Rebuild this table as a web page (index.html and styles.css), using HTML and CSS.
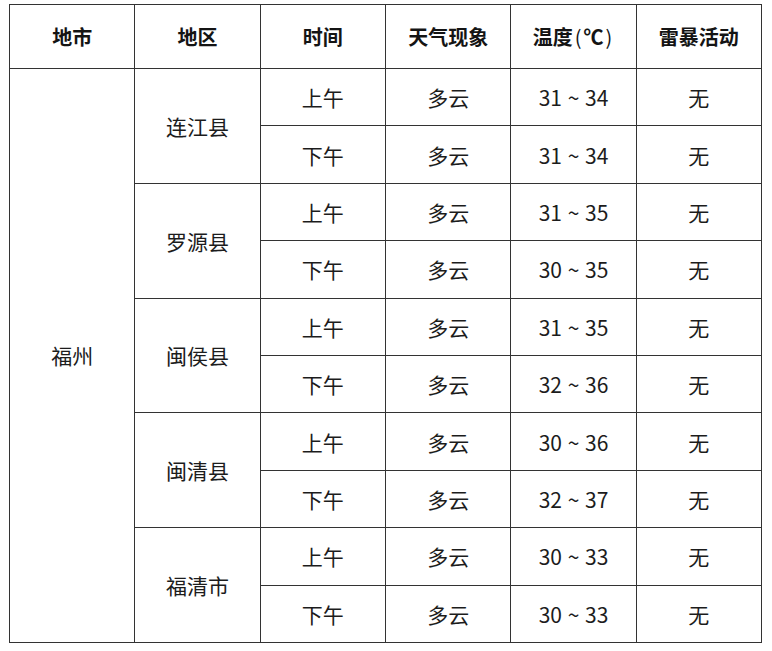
FILE: index.html
```html
<!DOCTYPE html>
<html lang="zh">
<head>
<meta charset="utf-8">
<link rel="stylesheet" href="styles.css">
</head>
<body>
<table class="forecast">
  <thead>
    <tr class="head">
      <th>地市</th><th>地区</th><th>时间</th><th>天气现象</th><th>温度<span class="paren">(</span>℃<span class="paren">)</span></th><th>雷暴活动</th>
    </tr>
  </thead>
  <tbody>
    <tr><td rowspan="10">福州</td><td rowspan="2">连江县</td><td>上午</td><td>多云</td><td>31 ~ 34</td><td>无</td></tr>
    <tr><td>下午</td><td>多云</td><td>31 ~ 34</td><td>无</td></tr>
    <tr><td rowspan="2">罗源县</td><td>上午</td><td>多云</td><td>31 ~ 35</td><td>无</td></tr>
    <tr><td>下午</td><td>多云</td><td>30 ~ 35</td><td>无</td></tr>
    <tr><td rowspan="2">闽侯县</td><td>上午</td><td>多云</td><td>31 ~ 35</td><td>无</td></tr>
    <tr><td>下午</td><td>多云</td><td>32 ~ 36</td><td>无</td></tr>
    <tr><td rowspan="2">闽清县</td><td>上午</td><td>多云</td><td>30 ~ 36</td><td>无</td></tr>
    <tr><td>下午</td><td>多云</td><td>32 ~ 37</td><td>无</td></tr>
    <tr><td rowspan="2">福清市</td><td>上午</td><td>多云</td><td>30 ~ 33</td><td>无</td></tr>
    <tr><td>下午</td><td>多云</td><td>30 ~ 33</td><td>无</td></tr>
  </tbody>
</table>
</body>
</html>
```
FILE: styles.css
```css
html, body {
  margin: 0;
  padding: 0;
  background: #ffffff;
}
body {
  padding: 4px 0 0 9px;
  font-family: "Noto Sans CJK SC", "Noto Sans", sans-serif;
  color: #1c1c1c;
}
.forecast {
  border-collapse: collapse;
  width: 753px;
  table-layout: fixed;
}
.forecast th,
.forecast td {
  border: 1px solid #333333;
  text-align: center;
  vertical-align: middle;
  padding: 0;
}
.forecast th {
  font-weight: 700;
  font-size: 20px;
  height: 63px;
  color: #141414;
}
.forecast th .paren {
  font-weight: 400;
  margin: 0 2px;
}
.forecast td {
  font-size: 21px;
  font-weight: 400;
  height: 56.4px;
  word-spacing: 1px;
}
```
